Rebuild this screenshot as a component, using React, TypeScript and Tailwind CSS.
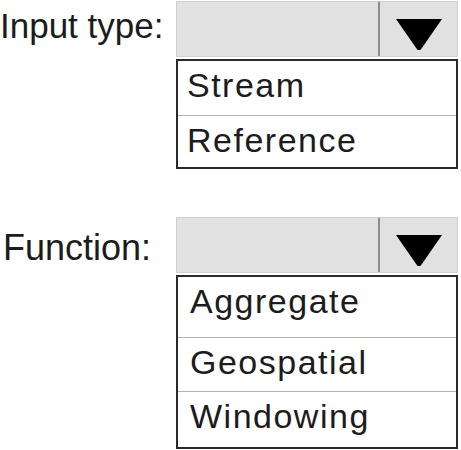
import React from "react";

const font = { fontFamily: '"Liberation Sans", Arial, sans-serif' };

function Select({ tri }: { tri: string }) {
  return (
    <div className="flex h-[56px] w-[282px] border border-[#cfcfcf] bg-[#e1e1e1]">
      <div className="flex-1" />
      <div className="w-[2px] bg-[#8c8c8c]" />
      <div className="flex w-[77px] items-start justify-center">
        <svg width="46" height="32" viewBox="0 0 46 32" className={tri}>
          <polygon points="0,0 46,0 24.5,31 21.5,31" fill="#000" />
        </svg>
      </div>
    </div>
  );
}

function List({ items, pl }: { items: { t: string; h: number }[]; pl: string }) {
  return (
    <div className="mt-[2px] w-[282px] border-2 border-[#2a2a2a] bg-white">
      {items.map((it, i) => (
        <div
          key={it.t}
          className={
            (i > 0 ? "border-t border-[#b4b4b4] " : "") +
            pl +
            " pt-[5px] text-[34px] leading-[38px] tracking-[1.5px] text-[#1c1c1c]"
          }
          style={{ height: it.h }}
        >
          {it.t}
        </div>
      ))}
    </div>
  );
}

export default function App() {
  return (
    <div className="h-[450px] w-[461px] bg-white pt-[1px]" style={font}>
      <div className="grid grid-cols-[176px_282px]">
        <div className="mt-[5px] text-[35px] leading-[40px] text-[#1c1c1c]">Input type:</div>
        <Select tri="mt-[17px]" />
        <div />
        <List
          pl="pl-[9px]"
          items={[
            { t: "Stream", h: 54 },
            { t: "Reference", h: 52 },
          ]}
        />
      </div>
      <div className="mt-[48px] grid grid-cols-[176px_282px]">
        <div className="mt-[11px] pl-[3px] text-[36px] leading-[40px] text-[#1c1c1c]">Function:</div>
        <Select tri="mt-[17px]" />
        <div />
        <List
          pl="pl-[12px]"
          items={[
            { t: "Aggregate", h: 60 },
            { t: "Geospatial", h: 54 },
            { t: "Windowing", h: 56 },
          ]}
        />
      </div>
    </div>
  );
}
